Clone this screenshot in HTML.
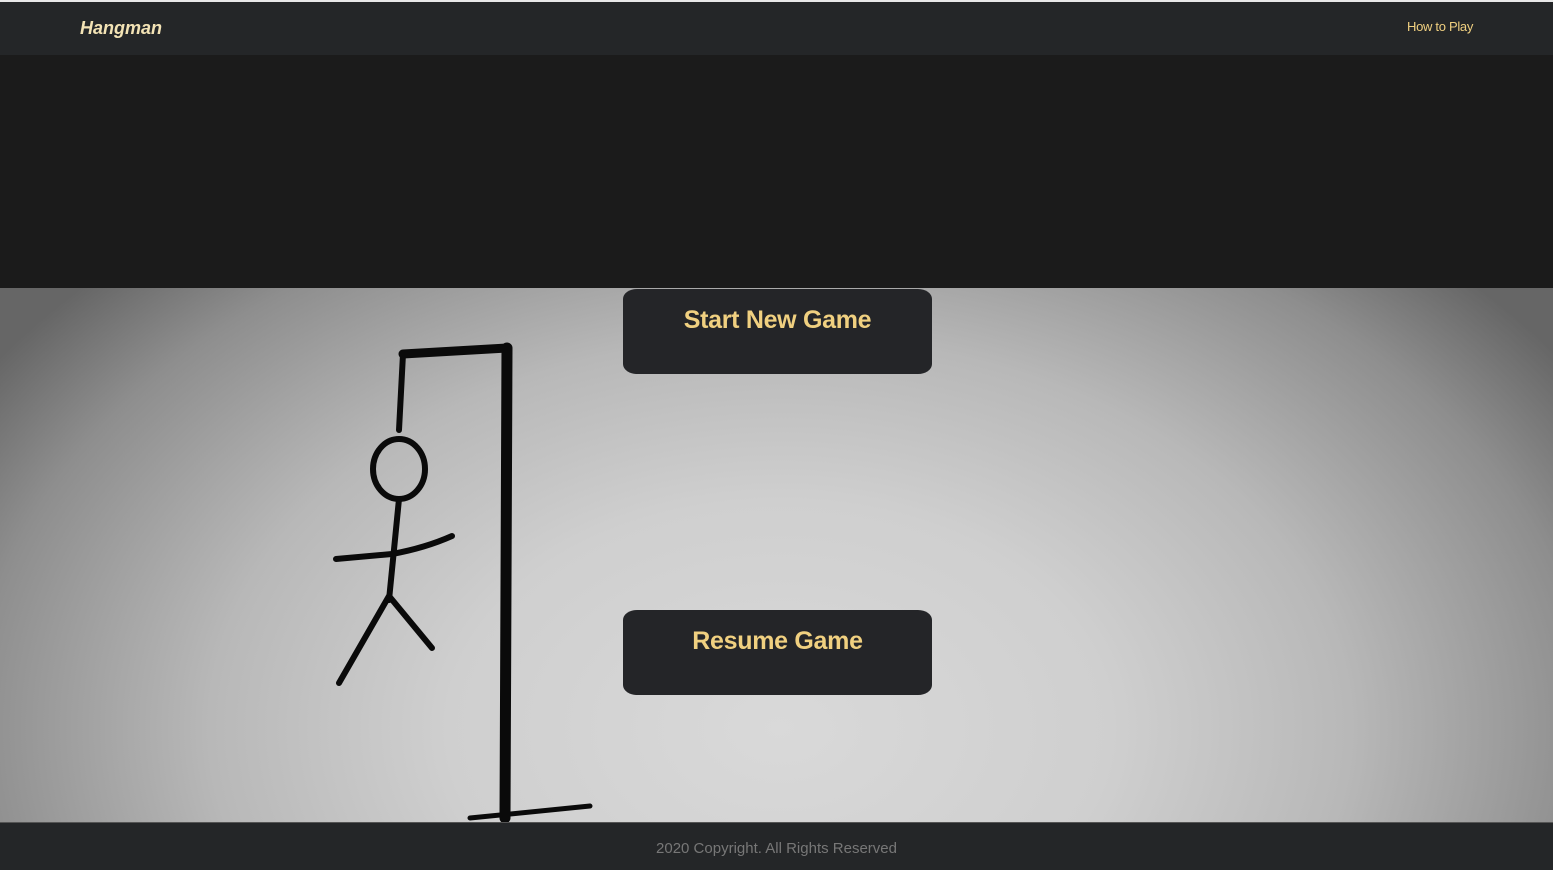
<!DOCTYPE html>
<html><head><meta charset="utf-8"><style>
*{margin:0;padding:0;box-sizing:border-box}
html,body{width:1553px;height:870px;overflow:hidden;background:#1b1b1b;font-family:"Liberation Sans",Arial,sans-serif}
.top{position:absolute;left:0;top:0;width:1553px;height:2px;background:#e8e8e8}
.nav{position:absolute;left:0;top:2px;width:1553px;height:53px;background:#242628}
.brand{position:absolute;left:80px;top:16px;font-size:18px;font-weight:bold;font-style:italic;color:#f3e3b5}
.how{position:absolute;left:1407px;top:17px;font-size:13px;letter-spacing:-0.3px;color:#f0d080}
.hero{position:absolute;left:0;top:288px;width:1553px;height:534px;
background:radial-gradient(ellipse 950px 650px at 780px 440px,#d9d9d9 0%,#cfcfcf 35%,#b8b8b8 60%,#8e8e8e 85%,#666 100%)}
.btn{position:absolute;left:623px;width:309px;height:85px;background:#242528;border-radius:14px/10px;color:#f0d080;font-weight:bold;font-size:25px;letter-spacing:-0.3px;text-align:center;padding-top:17px}
.foot{position:absolute;left:0;top:822px;width:1553px;height:48px;background:#242628;border-top:1px solid #555;color:#777;font-size:15px;text-align:center;padding-top:17px}
</style></head><body>
<div class="top"></div>
<div class="nav"><div class="brand">Hangman</div><div class="how">How to Play</div></div>
<div class="hero">
<svg width="1553" height="534" style="position:absolute;left:0;top:0">
<g fill="none" stroke="#0a0a0a" stroke-linecap="round" stroke-linejoin="round">
<path d="M505 530 L507 60" stroke-width="11"/>
<path d="M507 60 L403 66" stroke-width="9"/>
<path d="M403 66 L399 142" stroke-width="6"/>
<path d="M470 530 L590 518" stroke-width="5"/>
<ellipse cx="399" cy="181" rx="26" ry="30" stroke-width="6"/>
<path d="M399 211 L389 312" stroke-width="6"/>
<path d="M336 271 L392 266 Q425 260 452 248" stroke-width="6"/>
<path d="M389 308 L339 395 M389 308 L432 360" stroke-width="6"/>
</g></svg>
</div>
<div class="btn" style="top:289px">Start New Game</div>
<div class="btn" style="top:610px">Resume Game</div>
<div class="foot">2020 Copyright. All Rights Reserved</div>
</body></html>
